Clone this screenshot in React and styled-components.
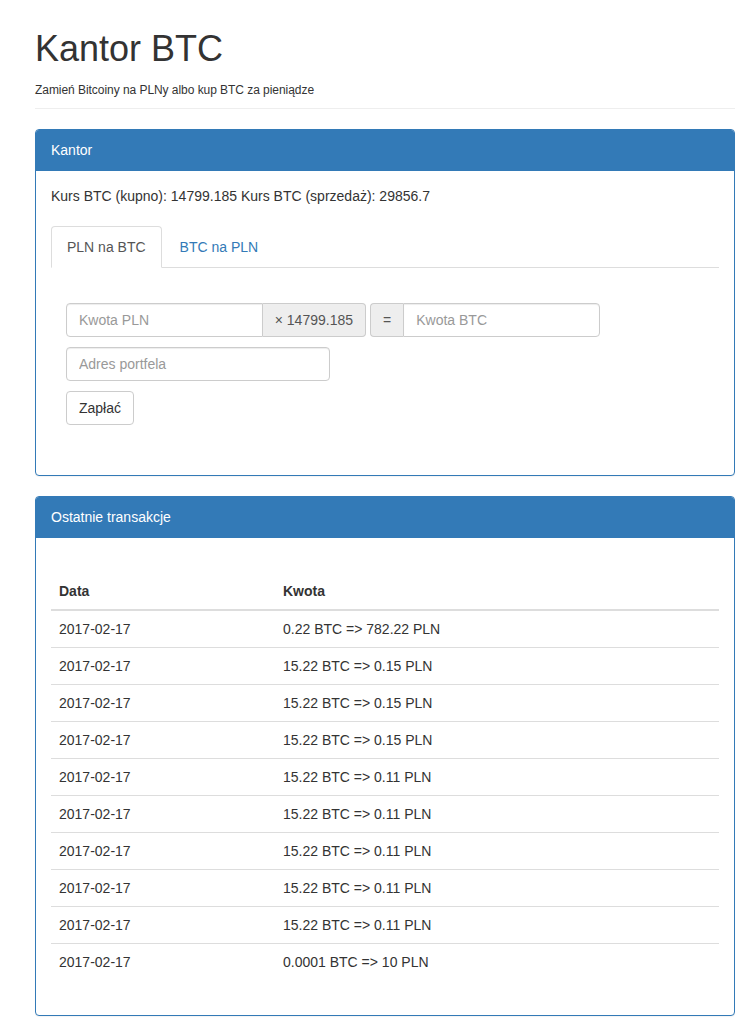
import React from "react";
import styled, { createGlobalStyle } from "styled-components";

const GlobalStyle = createGlobalStyle`
  *, *::before, *::after { box-sizing: border-box; }
  html, body { margin: 0; padding: 0; background: #fff; }
  body {
    font-family: "Liberation Sans", Arial, Helvetica, sans-serif;
    font-size: 14px;
    line-height: 1.42857143;
    color: #333;
  }
`;

const Page = styled.div`
  width: 700px;
  margin-left: 35px;
`;

const Header = styled.header`
  padding: 29px 0 9px;
  border-bottom: 1px solid #eee;
  margin-bottom: 20px;
`;

const Title = styled.h1`
  margin: 0 0 13px;
  font-size: 36px;
  font-weight: 400;
  line-height: 1.1;
  color: #333;
`;

const Subtitle = styled.div`
  font-size: 12px;
  line-height: 17px;
  letter-spacing: -0.05px;
`;

const Panel = styled.section`
  border: 1px solid #337ab7;
  border-radius: 4px;
  margin-bottom: 20px;
  background: #fff;
  box-shadow: 0 1px 1px rgba(0, 0, 0, 0.05);
`;

const PanelHeading = styled.div`
  background: #337ab7;
  color: #fff;
  padding: 10px 15px;
  border-bottom: 1px solid #337ab7;
  border-radius: 3px 3px 0 0;
  line-height: 20px;
`;

const PanelBody = styled.div`
  padding: 15px;
`;

const Rates = styled.p`
  margin: 0 0 20px;
  line-height: 20px;
`;

const Tabs = styled.ul`
  display: flex;
  list-style: none;
  margin: 0;
  padding: 0;
  border-bottom: 1px solid #ddd;
`;

const Tab = styled.li`
  margin-right: 2px;
  margin-bottom: -1px;
  padding: 10px 15px;
  line-height: 20px;
  border: 1px solid ${(p) => (p.$active ? "#ddd" : "transparent")};
  border-bottom-color: ${(p) => (p.$active ? "#fff" : "transparent")};
  border-radius: 4px 4px 0 0;
  background: ${(p) => (p.$active ? "#fff" : "transparent")};
  color: ${(p) => (p.$active ? "#555" : "#337ab7")};
  cursor: pointer;
`;

const TabPane = styled.div`
  padding: 35px 15px 35px;
`;

const FormRow = styled.div`
  display: flex;
  gap: 4px;
  margin-bottom: 10px;
`;

const InputGroup = styled.div`
  display: flex;
  width: ${(p) => p.$width}px;
`;

const Input = styled.input`
  flex: 1;
  min-width: 0;
  width: ${(p) => (p.$width ? `${p.$width}px` : "auto")};
  height: 34px;
  padding: 6px 12px;
  font-family: inherit;
  font-size: 14px;
  line-height: 20px;
  color: #555;
  background: #fff;
  border: 1px solid #ccc;
  border-radius: ${(p) => p.$radius || "4px"};
  box-shadow: inset 0 1px 1px rgba(0, 0, 0, 0.075);
  outline: none;
  &::placeholder { color: #999; }
`;

const SingleInput = styled(Input)`
  flex: none;
`;

const Addon = styled.span`
  display: flex;
  align-items: center;
  height: 34px;
  padding: 6px 12px;
  font-size: 14px;
  line-height: 1;
  color: #555;
  background: #eee;
  border: 1px solid #ccc;
  border-radius: ${(p) => (p.$first ? "4px 0 0 4px" : "0 4px 4px 0")};
  ${(p) => (p.$first ? "border-right: 0;" : "border-left: 0;")}
  white-space: nowrap;
`;

const Button = styled.button`
  display: inline-block;
  height: 34px;
  padding: 6px 12px;
  font-family: inherit;
  font-size: 14px;
  line-height: 20px;
  color: #333;
  background: #fff;
  border: 1px solid #ccc;
  border-radius: 4px;
  cursor: pointer;
`;

const Table = styled.table`
  width: 100%;
  border-collapse: collapse;
  margin: 20px 0;
`;

const Th = styled.th`
  text-align: left;
  font-weight: 700;
  padding: 8px;
  line-height: 20px;
  vertical-align: bottom;
  border-bottom: 2px solid #ddd;
  width: ${(p) => (p.$width ? `${p.$width}px` : "auto")};
`;

const Td = styled.td`
  padding: 8px;
  line-height: 20px;
  border-top: 1px solid #ddd;
`;

const transactions = [
  ["2017-02-17", "0.22 BTC => 782.22 PLN"],
  ["2017-02-17", "15.22 BTC => 0.15 PLN"],
  ["2017-02-17", "15.22 BTC => 0.15 PLN"],
  ["2017-02-17", "15.22 BTC => 0.15 PLN"],
  ["2017-02-17", "15.22 BTC => 0.11 PLN"],
  ["2017-02-17", "15.22 BTC => 0.11 PLN"],
  ["2017-02-17", "15.22 BTC => 0.11 PLN"],
  ["2017-02-17", "15.22 BTC => 0.11 PLN"],
  ["2017-02-17", "15.22 BTC => 0.11 PLN"],
  ["2017-02-17", "0.0001 BTC => 10 PLN"],
];

export default function App() {
  return (
    <>
      <GlobalStyle />
      <Page>
        <Header>
          <Title>Kantor BTC</Title>
          <Subtitle>Zamień Bitcoiny na PLNy albo kup BTC za pieniądze</Subtitle>
        </Header>

        <Panel>
          <PanelHeading>Kantor</PanelHeading>
          <PanelBody>
            <Rates>Kurs BTC (kupno): 14799.185 Kurs BTC (sprzedaż): 29856.7</Rates>
            <Tabs>
              <Tab $active>PLN na BTC</Tab>
              <Tab>BTC na PLN</Tab>
            </Tabs>
            <TabPane>
              <FormRow>
                <InputGroup $width={300}>
                  <Input placeholder="Kwota PLN" $radius="4px 0 0 4px" />
                  <Addon>× 14799.185</Addon>
                </InputGroup>
                <InputGroup $width={230}>
                  <Addon $first>=</Addon>
                  <Input placeholder="Kwota BTC" $radius="0 4px 4px 0" />
                </InputGroup>
              </FormRow>
              <FormRow>
                <SingleInput placeholder="Adres portfela" $width={264} />
              </FormRow>
              <Button type="button">Zapłać</Button>
            </TabPane>
          </PanelBody>
        </Panel>

        <Panel>
          <PanelHeading>Ostatnie transakcje</PanelHeading>
          <PanelBody>
            <Table>
              <thead>
                <tr>
                  <Th $width={224}>Data</Th>
                  <Th>Kwota</Th>
                </tr>
              </thead>
              <tbody>
                {transactions.map(([date, amount], i) => (
                  <tr key={i}>
                    <Td>{date}</Td>
                    <Td>{amount}</Td>
                  </tr>
                ))}
              </tbody>
            </Table>
          </PanelBody>
        </Panel>
      </Page>
    </>
  );
}
